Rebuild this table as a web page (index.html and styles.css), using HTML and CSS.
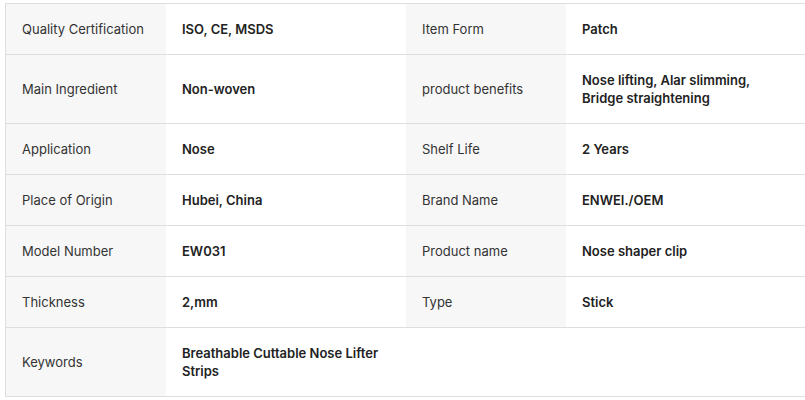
FILE: index.html
```html
<!DOCTYPE html>
<html lang="en">
<head>
    <meta charset="UTF-8">
    <meta name="viewport" content="width=device-width, initial-scale=1.0">
    <title>Product Attributes</title>
    <link rel="stylesheet" href="styles.css">
</head>
<body>
    <!-- Key attributes table -->
    <div class="attr-wrap">
        <table class="attr-table">
            <tr>
                <td class="attr-name">Quality Certification</td>
                <td class="attr-value">ISO, CE, MSDS</td>
                <td class="attr-name">Item Form</td>
                <td class="attr-value">Patch</td>
            </tr>
            <tr>
                <td class="attr-name">Main Ingredient</td>
                <td class="attr-value">Non-woven</td>
                <td class="attr-name">product benefits</td>
                <td class="attr-value">Nose lifting, Alar slimming, Bridge straightening</td>
            </tr>
            <tr>
                <td class="attr-name">Application</td>
                <td class="attr-value">Nose</td>
                <td class="attr-name">Shelf Life</td>
                <td class="attr-value">2 Years</td>
            </tr>
            <tr>
                <td class="attr-name">Place of Origin</td>
                <td class="attr-value">Hubei, China</td>
                <td class="attr-name">Brand Name</td>
                <td class="attr-value">ENWEI./OEM</td>
            </tr>
            <tr>
                <td class="attr-name">Model Number</td>
                <td class="attr-value">EW031</td>
                <td class="attr-name">Product name</td>
                <td class="attr-value">Nose shaper clip</td>
            </tr>
            <tr>
                <td class="attr-name">Thickness</td>
                <td class="attr-value">2,mm</td>
                <td class="attr-name">Type</td>
                <td class="attr-value">Stick</td>
            </tr>
            <tr>
                <td class="attr-name">Keywords</td>
                <td class="attr-value">Breathable Cuttable Nose Lifter Strips</td>
                <td class="attr-empty" colspan="2"></td>
            </tr>
        </table>
    </div>
</body>
</html>
```

FILE: styles.css
```css
body {
    margin: 0;
    font-family: Inter, "Noto Sans", Arial, sans-serif;
    background-color: #fff;
    overflow: hidden;
}

.attr-wrap {
    padding: 3px 0 0 5px;
    width: 802px;
}

/* Attribute table */
.attr-table {
    width: 802px;
    border-collapse: collapse;
    table-layout: fixed;
    border: 1px solid #dedede;
    font-size: 13px;
    line-height: 18px;
}

.attr-table tr {
    border-bottom: 1px solid #dedede;
}

.attr-table td {
    padding: 16px;
    vertical-align: middle;
    text-align: left;
}

.attr-name {
    width: 128px;
    background-color: #f7f7f7;
    color: #333;
}

.attr-value {
    width: 208px;
    color: #222;
    font-weight: 600;
}

.attr-empty {
    background-color: #fff;
}
```
